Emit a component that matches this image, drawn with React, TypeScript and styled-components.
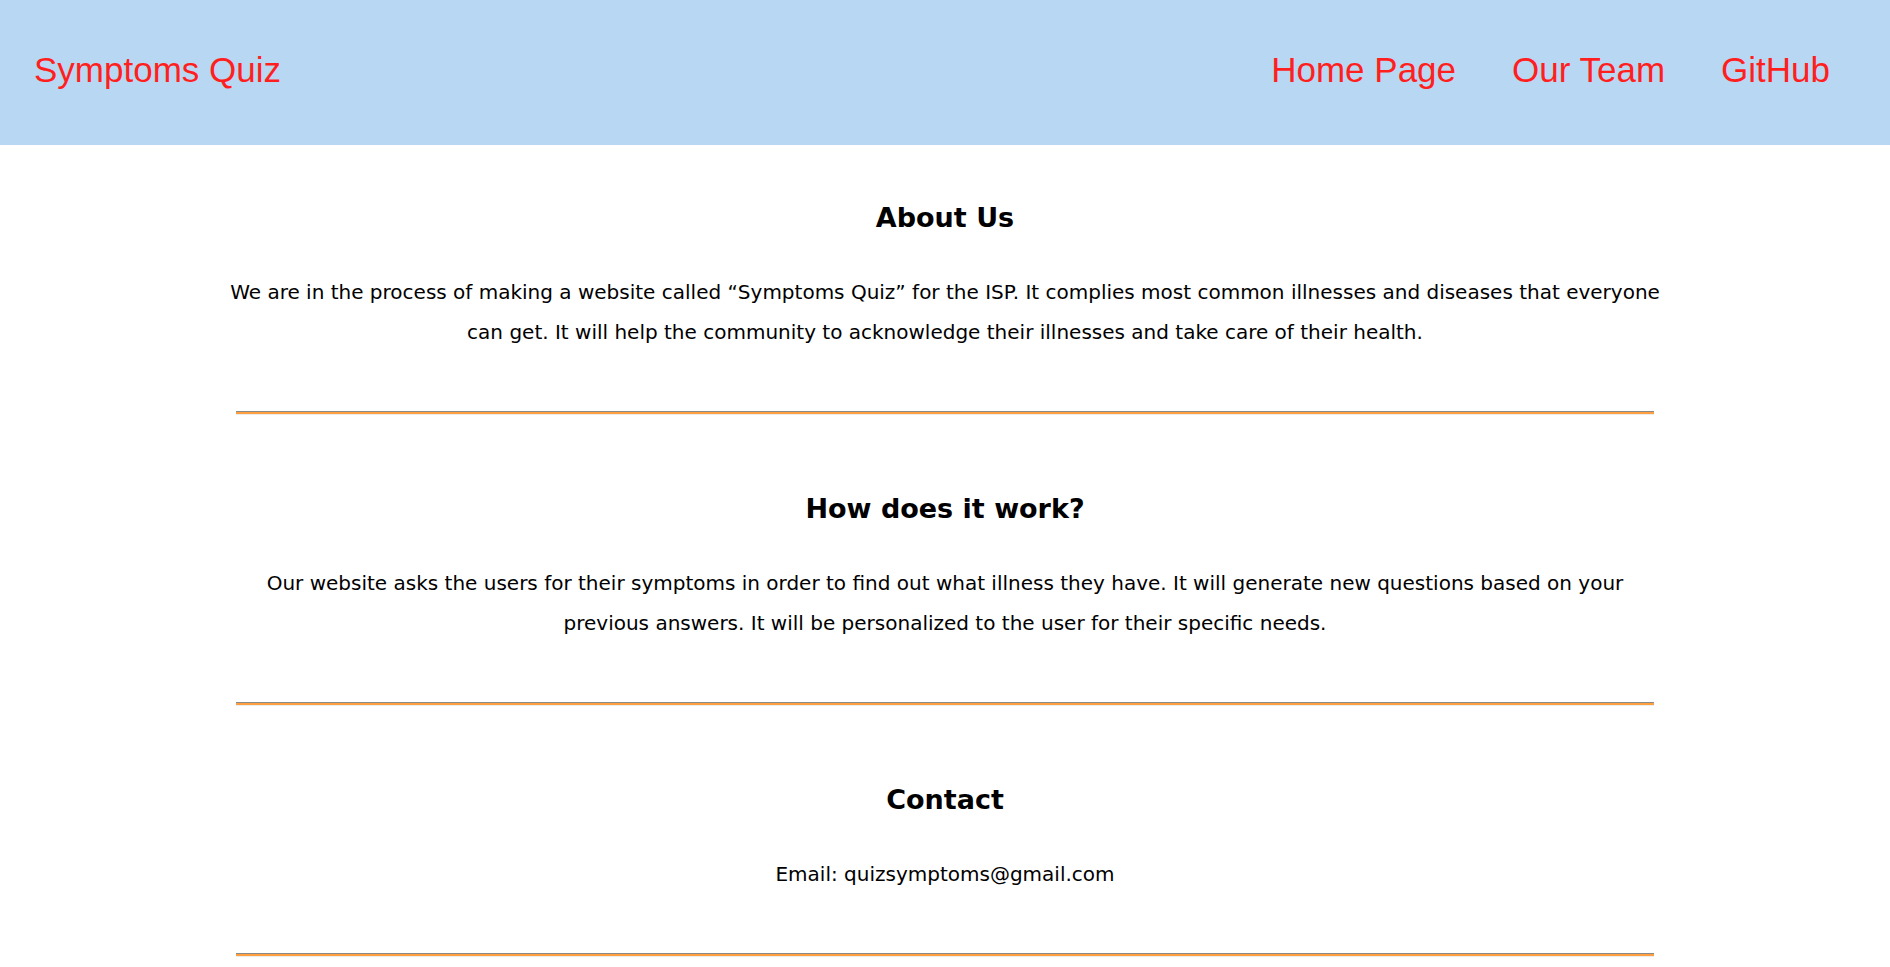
import React from "react";
import styled, { createGlobalStyle } from "styled-components";

const GlobalStyle = createGlobalStyle`
  html, body {
    margin: 0;
    padding: 0;
    background: #ffffff;
  }
  body {
    font-family: "DejaVu Sans", Verdana, sans-serif;
    color: #000000;
  }
`;

const Header = styled.header`
  height: 145px;
  background: #b8d7f2;
  display: flex;
  align-items: center;
  justify-content: space-between;
  padding: 0 60px 0 34px;
  box-sizing: border-box;
`;

const Brand = styled.a`
  font-family: "Liberation Sans", Arial, sans-serif;
  font-size: 35px;
  color: #ff1f1f;
  text-decoration: none;
  margin-top: -6px;
`;

const Nav = styled.nav`
  display: flex;
  align-items: center;
  gap: 56px;
  margin-top: -6px;
`;

const NavLink = styled.a`
  font-family: "Liberation Sans", Arial, sans-serif;
  font-size: 35px;
  color: #ff1f1f;
  text-decoration: none;
`;

const Main = styled.main`
  display: flex;
  flex-direction: column;
  align-items: center;
`;

const Section = styled.section<{ $first?: boolean }>`
  width: 100%;
  display: flex;
  flex-direction: column;
  align-items: center;
  padding-top: ${(p) => (p.$first ? "56px" : "77px")};
  text-align: center;
`;

const Title = styled.h2`
  margin: 0 0 38px;
  font-size: 27px;
  line-height: 33px;
  font-weight: bold;
`;

const Text = styled.p`
  margin: 0;
  max-width: 1440px;
  font-size: 20px;
  line-height: 40px;
`;

const Divider = styled.hr`
  width: 75%;
  height: 2px;
  margin: 59px auto 0;
  border: none;
  border-top: 1px solid #8a8a8a;
  border-bottom: 1px solid #ececec;
  background: #ff9f40;
`;

export default function App() {
  return (
    <>
      <GlobalStyle />
      <Header>
        <Brand href="#">Symptoms Quiz</Brand>
        <Nav>
          <NavLink href="#">Home Page</NavLink>
          <NavLink href="#">Our Team</NavLink>
          <NavLink href="#">GitHub</NavLink>
        </Nav>
      </Header>
      <Main>
        <Section $first>
          <Title>About Us</Title>
          <Text>
            We are in the process of making a website called “Symptoms Quiz” for the ISP. It complies most common illnesses and diseases that everyone can get. It will help the community to acknowledge their illnesses and take care of their health.
          </Text>
        </Section>
        <Divider />
        <Section>
          <Title>How does it work?</Title>
          <Text>
            Our website asks the users for their symptoms in order to find out what illness they have. It will generate new questions based on your previous answers. It will be personalized to the user for their specific needs.
          </Text>
        </Section>
        <Divider />
        <Section>
          <Title>Contact</Title>
          <Text>Email: quizsymptoms@gmail.com</Text>
        </Section>
        <Divider />
      </Main>
    </>
  );
}
